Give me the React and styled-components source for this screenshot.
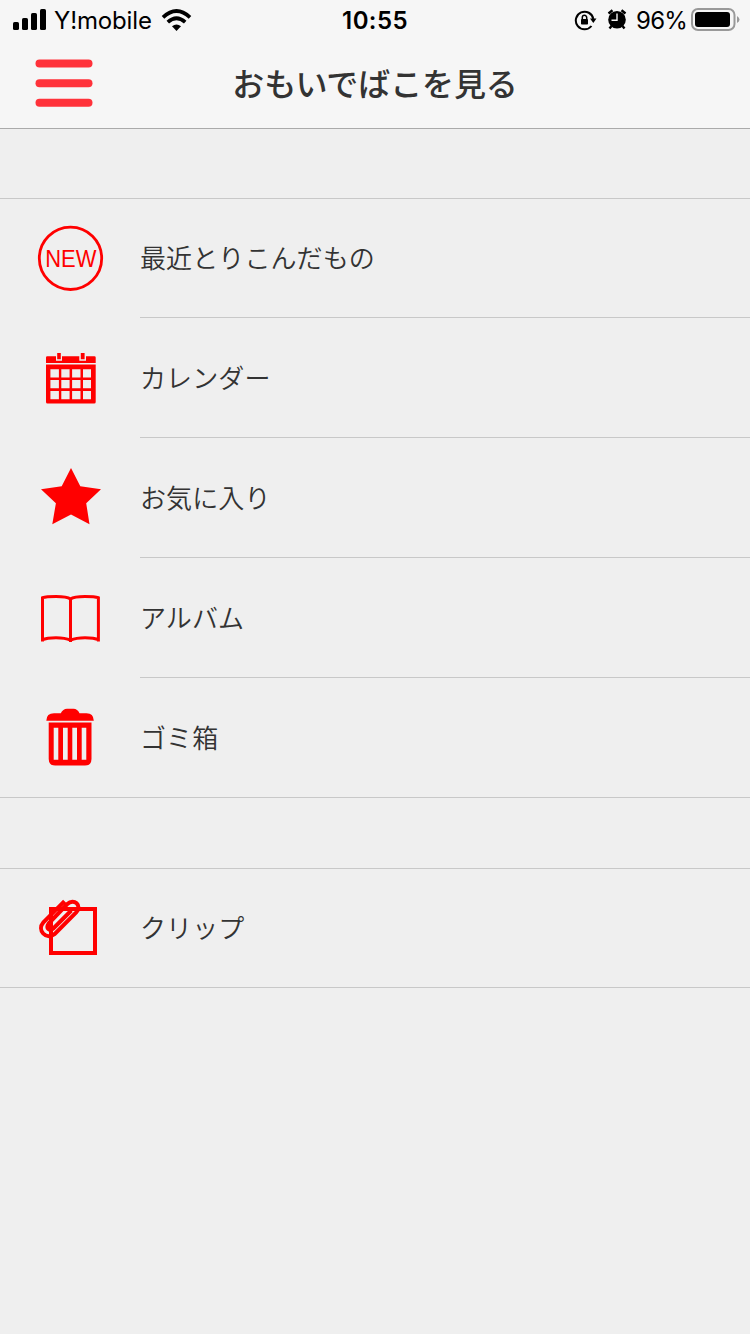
import styled, { createGlobalStyle } from "styled-components";

const GlobalStyle = createGlobalStyle`
  * {
    box-sizing: border-box;
  }
  body {
    margin: 0;
    background-color: #efefef;
    color: #333333;
    font-family: "Noto Sans CJK JP", sans-serif;
  }
`;

const Screen = styled.div`
  width: 100%;
  min-height: 1334px;
`;

const StatusBar = styled.div`
  height: 40px;
  display: grid;
  grid-template-columns: 1fr auto 1fr;
  background-color: #f6f6f6;
  color: #000000;
  font-family: Inter, sans-serif;
  font-size: 24px;
  line-height: 42px;
`;

const StatusSide = styled.div`
  height: 40px;
  display: flex;
  justify-content: ${(props) => (props.$end ? "flex-end" : "flex-start")};
  svg {
    display: block;
    flex: none;
  }
`;

const Carrier = styled.span`
  margin-left: 7px;
  letter-spacing: -0.15px;
  white-space: nowrap;
`;

const Clock = styled.span`
  font-weight: 600;
  letter-spacing: 0.4px;
`;

const Percent = styled.span`
  margin: 0 4px 0 8px;
  letter-spacing: -0.8px;
`;

const Header = styled.header`
  height: 89px;
  display: grid;
  grid-template-columns: 128px 1fr 128px;
  background-color: #f6f6f6;
  border-bottom: 1px solid #aaaaaa;
`;

const MenuButton = styled.button`
  padding: 0;
  border: none;
  background: none;
  cursor: pointer;
  svg {
    display: block;
  }
`;

const Title = styled.h1`
  margin: 0;
  font-size: 32px;
  font-weight: 500;
  letter-spacing: -0.1px;
  line-height: 85px;
  text-align: center;
`;

const Menu = styled.main`
  padding-top: 69px;
  display: flex;
  flex-direction: column;
  gap: 70px;
`;

const Section = styled.ul`
  margin: 0;
  padding: 0;
  list-style: none;
`;

const Label = styled.span`
  flex: 1;
  border-bottom: 1px solid #c8c8c8;
  font-size: 26px;
  font-weight: 350;
  letter-spacing: 0.1px;
  line-height: 118px;
`;

const Row = styled.li`
  height: 120px;
  display: flex;
  &:first-child {
    border-top: 1px solid #c8c8c8;
  }
  &:first-child ${Label} {
    line-height: 116px;
  }
  &:last-child {
    border-bottom: 1px solid #c8c8c8;
  }
  &:last-child ${Label} {
    border-bottom: none;
  }
`;

const RowIcon = styled.svg.attrs({ viewBox: "0 0 140 118" })`
  display: block;
  flex: none;
  width: 140px;
  height: 118px;
  fill: #ff0000;
`;

const NewIcon = () => (
  <RowIcon>
    <circle cx="70.5" cy="59.3" r="31.2" fill="none" stroke="#ff0000" strokeWidth="2.8" />
    <text
      x="45.2"
      y="68"
      fontFamily="Liberation Sans, sans-serif"
      fontSize="24"
      textLength="51.2"
      lengthAdjust="spacingAndGlyphs"
    >
      NEW
    </text>
  </RowIcon>
);

const CalendarIcon = () => (
  <RowIcon>
    <path d="M46 39.5 Q46 38.2 47.3 38.2 H56 V42.7 H62 V38.2 H79.3 V42.7 H86 V38.2 H94.4 Q95.7 38.2 95.7 39.5 V45 H46Z" />
    <path d="M57.2 35H60.8V41.3H57.2ZM80.8 35H84.6V41.3H80.8Z" />
    <path
      fillRule="evenodd"
      d="M46 46.5H95.7V84Q95.7 85.5 94.2 85.5H47.5Q46 85.5 46 84Z
        M50.4 51.2V59.6H58.9V51.2Z M61.3 51.2V59.6H69.6V51.2Z M72.1 51.2V59.6H80.5V51.2Z M83 51.2V59.6H91V51.2Z
        M50.4 62V70.3H58.9V62Z M61.3 62V70.3H69.6V62Z M72.1 62V70.3H80.5V62Z M83 62V70.3H91V62Z
        M50.4 73V81.3H58.9V73Z M61.3 73V81.3H69.6V73Z M72.1 73V81.3H80.5V73Z M83 73V81.3H91V73Z"
    />
  </RowIcon>
);

const StarIcon = () => (
  <RowIcon>
    <path d="M71 30L80.3 48.3L101 51.2L86.2 65.2L89.5 86.2L71 76.4L52.3 86.2L55.9 65.2L41 51.2L61.7 48.3Z" />
  </RowIcon>
);

const AlbumIcon = () => (
  <RowIcon>
    <path
      fill="none"
      stroke="#ff0000"
      strokeWidth="3"
      d="M42.500 83.500V39.700Q46 38.500 56 38.500Q67 38.500 70.500 41Q74 38.500 85 38.500Q95 38.500 98.400 39.700V83.500M70.500 40V84M42 82Q47 79.800 56 79.800Q65 79.800 70.500 82.200Q76 79.800 85 79.800Q94 79.800 99 82"
    />
  </RowIcon>
);

const TrashIcon = () => (
  <RowIcon>
    <path d="M46.3 42.7Q46.5 35.3 54 35.3H60.8Q63 30.7 67 30.7H73.5Q77.500 30.7 79.500 35.3H86.500Q93.500 35.3 93.800 42.7Z" />
    <path
      fillRule="evenodd"
      d="M48.7 44.6H91.5V81Q91.5 87.5 85 87.5H55.2Q48.7 87.5 48.7 81Z
        M53.7 49.8V81.8H58.3V49.8Z M63 49.8V81.8H67.7V49.8Z M72.3 49.8V81.8H77V49.8Z M81.7 49.8V81.8H86.3V49.8Z"
    />
  </RowIcon>
);

const ClipIcon = () => (
  <RowIcon>
    <g fill="none" stroke="#ff0000">
      <rect x="51" y="40" width="44" height="44" strokeWidth="4" />
      <path
        strokeWidth="4"
        d="M64.5 32.2L43.4 53.3C36.500 61 46 71.500 54.500 65.200L76.200 43.300C82.500 36.500 74 29 67.300 35L48.600 54.600C45.500 59.500 49.500 62.800 53.300 59.500L71.300 41.500"
      />
    </g>
  </RowIcon>
);

const sections = [
  [
    { label: "最近とりこんだもの", Icon: NewIcon },
    { label: "カレンダー", Icon: CalendarIcon },
    { label: "お気に入り", Icon: StarIcon },
    { label: "アルバム", Icon: AlbumIcon },
    { label: "ゴミ箱", Icon: TrashIcon },
  ],
  [{ label: "クリップ", Icon: ClipIcon }],
];

function App() {
  return (
    <Screen>
      <GlobalStyle />
      <StatusBar>
        <StatusSide>
          <svg width="47" height="40">
            <rect x="13" y="22" width="6" height="8" rx="1.6" />
            <rect x="22" y="18" width="6" height="12" rx="1.6" />
            <rect x="31" y="13" width="6" height="17" rx="1.6" />
            <rect x="40" y="9" width="6" height="21" rx="1.6" />
          </svg>
          <Carrier>Y!mobile</Carrier>
          <svg width="48" height="40" viewBox="152 0 48 40">
            <g fill="none" stroke="#000000" strokeWidth="3.7">
              <path d="M163 17.3Q176.5 4.7 190 17.3" />
              <path d="M167.8 22.2Q176.5 14.3 185.2 22.2" />
            </g>
            <path d="M172 26.3Q176.5 22.7 181 26.3L176.5 31Z" />
          </svg>
        </StatusSide>
        <Clock>10:55</Clock>
        <StatusSide $end>
          <svg width="54" height="40" viewBox="574 0 54 40">
            <g fill="none" stroke="#000000">
              <path strokeWidth="2" d="M591.5 26A8.8 8.8 0 1 1 593.3 19" />
              <path strokeWidth="1.5" d="M582.3 19.5V17.5A2.2 2.2 0 0 1 586.7 17.5V19.5" />
            </g>
            <rect x="581" y="19" width="7" height="5.5" rx="0.8" />
            <path d="M590 18.5H596.5L593.3 23Z" />
            <circle cx="617" cy="19.7" r="8.8" />
            <path
              fill="none"
              stroke="#000000"
              strokeWidth="2.4"
              d="M608.5 13.5L612.5 10.3M621.5 10.3L625.5 13.5M611.5 26L609.5 28.5M622.5 26L624.5 28.5"
            />
            <path fill="none" stroke="#f6f6f6" strokeWidth="1.4" d="M617 13.5V20.2H611.5" />
          </svg>
          <Percent>96%</Percent>
          <svg width="59" height="40" viewBox="691 0 59 40">
            <rect x="692" y="9" width="42.5" height="21" rx="6" fill="none" stroke="#999999" strokeWidth="2" />
            <rect x="695" y="12" width="35" height="15" rx="3" />
            <path fill="#999999" d="M737 16Q739.5 17.5 739.5 19.5Q739.5 21.5 737 23Z" />
          </svg>
        </StatusSide>
      </StatusBar>
      <Header>
        <MenuButton aria-label="メニュー">
          <svg width="128" height="88" fill="#ff323a">
            <rect x="35.5" y="19.5" width="57" height="8" rx="4" />
            <rect x="35.5" y="39.2" width="57" height="8" rx="4" />
            <rect x="35.5" y="58.8" width="57" height="8" rx="4" />
          </svg>
        </MenuButton>
        <Title>おもいでばこを見る</Title>
      </Header>
      <Menu>
        {sections.map((rows, index) => (
          <Section key={index}>
            {rows.map(({ label, Icon }) => (
              <Row key={label}>
                <Icon />
                <Label>{label}</Label>
              </Row>
            ))}
          </Section>
        ))}
      </Menu>
    </Screen>
  );
}

export default App;
